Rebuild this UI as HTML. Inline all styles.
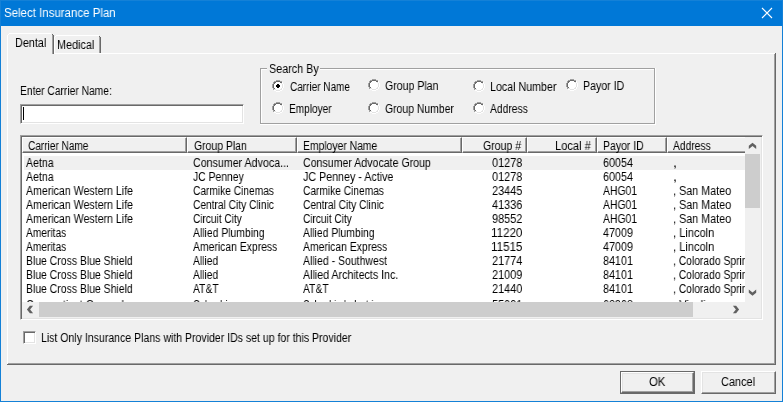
<!DOCTYPE html>
<html><head><meta charset="utf-8"><title>Select Insurance Plan</title>
<style>
*{box-sizing:border-box;margin:0;padding:0}
html,body{width:783px;height:402px;overflow:hidden;background:#f0f0f0}
body{position:relative;font-family:"Liberation Sans",sans-serif;font-size:12px;color:#000}
div,span,svg{position:absolute}
.t{will-change:transform;white-space:pre;font-size:12px;line-height:14px;transform-origin:0 0;display:block}
#title{left:0;top:0;width:783px;height:26px;background:#0078d7}
.bl{background:#1481d7}
.w{background:#fff}.g{background:#a0a0a0}.d{background:#696969}.l{background:#e3e3e3}
.btn{background:#f0f0f0;border:1px solid;border-color:#fff #696969 #696969 #fff;box-shadow:inset -1px -1px 0 #a0a0a0,inset 1px 1px 0 #e3e3e3}
.sunk{border:1px solid;border-color:#a0a0a0 #fff #fff #a0a0a0;box-shadow:inset 1px 1px 0 #696969,inset -1px -1px 0 #e3e3e3;background:#fff}
.hd{top:137px;height:16px;background:#f0f0f0;border:1px solid;border-color:#fff #696969 #696969 #fff;box-shadow:inset -1px -1px 0 #a0a0a0}
.rad{width:12px;height:12px;border-radius:50%;background:#fff;border:1px solid;border-color:#a0a0a0 #fff #fff #a0a0a0;box-shadow:inset 1px 1px 0 #696969,inset -1px -1px 0 #e3e3e3}
</style></head><body>
<div id="title"></div>
<div class="bl" style="left:0;top:0;width:1px;height:402px"></div><div class="bl" style="left:782px;top:0;width:1px;height:402px"></div><div class="bl" style="left:0;top:401px;width:783px;height:1px"></div><div class="bl" style="left:0;top:0;width:783px;height:1px"></div>
<svg style="left:761px;top:7px" width="12" height="12" viewBox="0 0 12 12"><path d="M1 1L11 11M11 1L1 11" stroke="#fff" stroke-width="1.1" fill="none"/></svg>
<div class="w" style="left:7px;top:53px;width:768px;height:1px"></div>
<div class="w" style="left:7px;top:53px;width:1px;height:311px"></div>
<div class="g" style="left:774px;top:54px;width:1px;height:310px"></div><div class="d" style="left:775px;top:53px;width:1px;height:312px"></div>
<div class="g" style="left:8px;top:363px;width:767px;height:1px"></div><div class="d" style="left:7px;top:364px;width:769px;height:1px"></div>
<div class="w" style="left:56px;top:35px;width:43px;height:1px"></div><div class="w" style="left:54px;top:37px;width:1px;height:16px"></div><div class="w" style="left:55px;top:36px;width:1px;height:1px"></div>
<div class="g" style="left:99px;top:37px;width:1px;height:16px"></div><div class="d" style="left:100px;top:37px;width:1px;height:16px"></div><div class="d" style="left:99px;top:36px;width:1px;height:1px"></div>
<div style="left:8px;top:34px;width:44px;height:21px;background:#f0f0f0"></div>
<div class="w" style="left:9px;top:33px;width:42px;height:1px"></div><div class="w" style="left:7px;top:35px;width:1px;height:19px"></div><div class="w" style="left:8px;top:34px;width:1px;height:1px"></div>
<div class="g" style="left:52px;top:35px;width:1px;height:19px"></div><div class="d" style="left:53px;top:35px;width:1px;height:19px"></div><div class="d" style="left:52px;top:34px;width:1px;height:1px"></div>
<div class="sunk" style="left:20px;top:104px;width:224px;height:20px"></div>
<div style="left:23px;top:107px;width:1px;height:13px;background:#000"></div>
<div style="left:260px;top:68px;width:395px;height:56px;border:1px solid #a0a0a0"></div>
<div class="w" style="left:261px;top:69px;width:393px;height:1px"></div><div class="w" style="left:261px;top:69px;width:1px;height:54px"></div><div class="w" style="left:655px;top:68px;width:1px;height:57px"></div><div class="w" style="left:260px;top:124px;width:396px;height:1px"></div>
<div style="left:267px;top:62px;width:53px;height:14px;background:#f0f0f0"></div>
<svg style="left:272px;top:80px" width="12" height="12" viewBox="0 0 12 12" shape-rendering="crispEdges"><path fill="#a0a0a0" d="M4 0h4v1h-4zM2 1h2v1h-2zM8 1h2v1h-2zM1 2h1v1h-1zM1 3h1v1h-1zM0 4h1v1h-1zM0 5h1v1h-1zM0 6h1v1h-1zM0 7h1v1h-1zM1 8h1v1h-1zM1 9h1v1h-1z"/><path fill="#696969" d="M4 1h4v1h-4zM2 2h2v1h-2zM8 2h2v1h-2zM2 3h1v1h-1zM1 4h1v1h-1zM1 5h1v1h-1zM1 6h1v1h-1zM1 7h1v1h-1zM2 8h1v1h-1z"/><path fill="#fff" d="M4 2h4v1h-4zM10 2h1v1h-1zM3 3h6v1h-6zM10 3h1v1h-1zM2 4h8v1h-8zM11 4h1v1h-1zM2 5h8v1h-8zM11 5h1v1h-1zM2 6h8v1h-8zM11 6h1v1h-1zM2 7h8v1h-8zM11 7h1v1h-1zM3 8h6v1h-6zM10 8h1v1h-1zM4 9h4v1h-4zM10 9h1v1h-1zM2 10h2v1h-2zM8 10h2v1h-2zM4 11h4v1h-4z"/><path fill="#e3e3e3" d="M9 3h1v1h-1zM10 4h1v1h-1zM10 5h1v1h-1zM10 6h1v1h-1zM10 7h1v1h-1zM9 8h1v1h-1zM2 9h2v1h-2zM8 9h2v1h-2zM4 10h4v1h-4z"/><path fill="#000" d="M5 4h1v1h-1zM6 4h1v1h-1zM4 5h1v1h-1zM5 5h1v1h-1zM6 5h1v1h-1zM7 5h1v1h-1zM4 6h1v1h-1zM5 6h1v1h-1zM6 6h1v1h-1zM7 6h1v1h-1zM5 7h1v1h-1zM6 7h1v1h-1z"/></svg>
<svg style="left:272px;top:102px" width="12" height="12" viewBox="0 0 12 12" shape-rendering="crispEdges"><path fill="#a0a0a0" d="M4 0h4v1h-4zM2 1h2v1h-2zM8 1h2v1h-2zM1 2h1v1h-1zM1 3h1v1h-1zM0 4h1v1h-1zM0 5h1v1h-1zM0 6h1v1h-1zM0 7h1v1h-1zM1 8h1v1h-1zM1 9h1v1h-1z"/><path fill="#696969" d="M4 1h4v1h-4zM2 2h2v1h-2zM8 2h2v1h-2zM2 3h1v1h-1zM1 4h1v1h-1zM1 5h1v1h-1zM1 6h1v1h-1zM1 7h1v1h-1zM2 8h1v1h-1z"/><path fill="#fff" d="M4 2h4v1h-4zM10 2h1v1h-1zM3 3h6v1h-6zM10 3h1v1h-1zM2 4h8v1h-8zM11 4h1v1h-1zM2 5h8v1h-8zM11 5h1v1h-1zM2 6h8v1h-8zM11 6h1v1h-1zM2 7h8v1h-8zM11 7h1v1h-1zM3 8h6v1h-6zM10 8h1v1h-1zM4 9h4v1h-4zM10 9h1v1h-1zM2 10h2v1h-2zM8 10h2v1h-2zM4 11h4v1h-4z"/><path fill="#e3e3e3" d="M9 3h1v1h-1zM10 4h1v1h-1zM10 5h1v1h-1zM10 6h1v1h-1zM10 7h1v1h-1zM9 8h1v1h-1zM2 9h2v1h-2zM8 9h2v1h-2zM4 10h4v1h-4z"/></svg>
<svg style="left:368px;top:79px" width="12" height="12" viewBox="0 0 12 12" shape-rendering="crispEdges"><path fill="#a0a0a0" d="M4 0h4v1h-4zM2 1h2v1h-2zM8 1h2v1h-2zM1 2h1v1h-1zM1 3h1v1h-1zM0 4h1v1h-1zM0 5h1v1h-1zM0 6h1v1h-1zM0 7h1v1h-1zM1 8h1v1h-1zM1 9h1v1h-1z"/><path fill="#696969" d="M4 1h4v1h-4zM2 2h2v1h-2zM8 2h2v1h-2zM2 3h1v1h-1zM1 4h1v1h-1zM1 5h1v1h-1zM1 6h1v1h-1zM1 7h1v1h-1zM2 8h1v1h-1z"/><path fill="#fff" d="M4 2h4v1h-4zM10 2h1v1h-1zM3 3h6v1h-6zM10 3h1v1h-1zM2 4h8v1h-8zM11 4h1v1h-1zM2 5h8v1h-8zM11 5h1v1h-1zM2 6h8v1h-8zM11 6h1v1h-1zM2 7h8v1h-8zM11 7h1v1h-1zM3 8h6v1h-6zM10 8h1v1h-1zM4 9h4v1h-4zM10 9h1v1h-1zM2 10h2v1h-2zM8 10h2v1h-2zM4 11h4v1h-4z"/><path fill="#e3e3e3" d="M9 3h1v1h-1zM10 4h1v1h-1zM10 5h1v1h-1zM10 6h1v1h-1zM10 7h1v1h-1zM9 8h1v1h-1zM2 9h2v1h-2zM8 9h2v1h-2zM4 10h4v1h-4z"/></svg>
<svg style="left:368px;top:102px" width="12" height="12" viewBox="0 0 12 12" shape-rendering="crispEdges"><path fill="#a0a0a0" d="M4 0h4v1h-4zM2 1h2v1h-2zM8 1h2v1h-2zM1 2h1v1h-1zM1 3h1v1h-1zM0 4h1v1h-1zM0 5h1v1h-1zM0 6h1v1h-1zM0 7h1v1h-1zM1 8h1v1h-1zM1 9h1v1h-1z"/><path fill="#696969" d="M4 1h4v1h-4zM2 2h2v1h-2zM8 2h2v1h-2zM2 3h1v1h-1zM1 4h1v1h-1zM1 5h1v1h-1zM1 6h1v1h-1zM1 7h1v1h-1zM2 8h1v1h-1z"/><path fill="#fff" d="M4 2h4v1h-4zM10 2h1v1h-1zM3 3h6v1h-6zM10 3h1v1h-1zM2 4h8v1h-8zM11 4h1v1h-1zM2 5h8v1h-8zM11 5h1v1h-1zM2 6h8v1h-8zM11 6h1v1h-1zM2 7h8v1h-8zM11 7h1v1h-1zM3 8h6v1h-6zM10 8h1v1h-1zM4 9h4v1h-4zM10 9h1v1h-1zM2 10h2v1h-2zM8 10h2v1h-2zM4 11h4v1h-4z"/><path fill="#e3e3e3" d="M9 3h1v1h-1zM10 4h1v1h-1zM10 5h1v1h-1zM10 6h1v1h-1zM10 7h1v1h-1zM9 8h1v1h-1zM2 9h2v1h-2zM8 9h2v1h-2zM4 10h4v1h-4z"/></svg>
<svg style="left:473px;top:80px" width="12" height="12" viewBox="0 0 12 12" shape-rendering="crispEdges"><path fill="#a0a0a0" d="M4 0h4v1h-4zM2 1h2v1h-2zM8 1h2v1h-2zM1 2h1v1h-1zM1 3h1v1h-1zM0 4h1v1h-1zM0 5h1v1h-1zM0 6h1v1h-1zM0 7h1v1h-1zM1 8h1v1h-1zM1 9h1v1h-1z"/><path fill="#696969" d="M4 1h4v1h-4zM2 2h2v1h-2zM8 2h2v1h-2zM2 3h1v1h-1zM1 4h1v1h-1zM1 5h1v1h-1zM1 6h1v1h-1zM1 7h1v1h-1zM2 8h1v1h-1z"/><path fill="#fff" d="M4 2h4v1h-4zM10 2h1v1h-1zM3 3h6v1h-6zM10 3h1v1h-1zM2 4h8v1h-8zM11 4h1v1h-1zM2 5h8v1h-8zM11 5h1v1h-1zM2 6h8v1h-8zM11 6h1v1h-1zM2 7h8v1h-8zM11 7h1v1h-1zM3 8h6v1h-6zM10 8h1v1h-1zM4 9h4v1h-4zM10 9h1v1h-1zM2 10h2v1h-2zM8 10h2v1h-2zM4 11h4v1h-4z"/><path fill="#e3e3e3" d="M9 3h1v1h-1zM10 4h1v1h-1zM10 5h1v1h-1zM10 6h1v1h-1zM10 7h1v1h-1zM9 8h1v1h-1zM2 9h2v1h-2zM8 9h2v1h-2zM4 10h4v1h-4z"/></svg>
<svg style="left:473px;top:102px" width="12" height="12" viewBox="0 0 12 12" shape-rendering="crispEdges"><path fill="#a0a0a0" d="M4 0h4v1h-4zM2 1h2v1h-2zM8 1h2v1h-2zM1 2h1v1h-1zM1 3h1v1h-1zM0 4h1v1h-1zM0 5h1v1h-1zM0 6h1v1h-1zM0 7h1v1h-1zM1 8h1v1h-1zM1 9h1v1h-1z"/><path fill="#696969" d="M4 1h4v1h-4zM2 2h2v1h-2zM8 2h2v1h-2zM2 3h1v1h-1zM1 4h1v1h-1zM1 5h1v1h-1zM1 6h1v1h-1zM1 7h1v1h-1zM2 8h1v1h-1z"/><path fill="#fff" d="M4 2h4v1h-4zM10 2h1v1h-1zM3 3h6v1h-6zM10 3h1v1h-1zM2 4h8v1h-8zM11 4h1v1h-1zM2 5h8v1h-8zM11 5h1v1h-1zM2 6h8v1h-8zM11 6h1v1h-1zM2 7h8v1h-8zM11 7h1v1h-1zM3 8h6v1h-6zM10 8h1v1h-1zM4 9h4v1h-4zM10 9h1v1h-1zM2 10h2v1h-2zM8 10h2v1h-2zM4 11h4v1h-4z"/><path fill="#e3e3e3" d="M9 3h1v1h-1zM10 4h1v1h-1zM10 5h1v1h-1zM10 6h1v1h-1zM10 7h1v1h-1zM9 8h1v1h-1zM2 9h2v1h-2zM8 9h2v1h-2zM4 10h4v1h-4z"/></svg>
<svg style="left:566px;top:79px" width="12" height="12" viewBox="0 0 12 12" shape-rendering="crispEdges"><path fill="#a0a0a0" d="M4 0h4v1h-4zM2 1h2v1h-2zM8 1h2v1h-2zM1 2h1v1h-1zM1 3h1v1h-1zM0 4h1v1h-1zM0 5h1v1h-1zM0 6h1v1h-1zM0 7h1v1h-1zM1 8h1v1h-1zM1 9h1v1h-1z"/><path fill="#696969" d="M4 1h4v1h-4zM2 2h2v1h-2zM8 2h2v1h-2zM2 3h1v1h-1zM1 4h1v1h-1zM1 5h1v1h-1zM1 6h1v1h-1zM1 7h1v1h-1zM2 8h1v1h-1z"/><path fill="#fff" d="M4 2h4v1h-4zM10 2h1v1h-1zM3 3h6v1h-6zM10 3h1v1h-1zM2 4h8v1h-8zM11 4h1v1h-1zM2 5h8v1h-8zM11 5h1v1h-1zM2 6h8v1h-8zM11 6h1v1h-1zM2 7h8v1h-8zM11 7h1v1h-1zM3 8h6v1h-6zM10 8h1v1h-1zM4 9h4v1h-4zM10 9h1v1h-1zM2 10h2v1h-2zM8 10h2v1h-2zM4 11h4v1h-4z"/><path fill="#e3e3e3" d="M9 3h1v1h-1zM10 4h1v1h-1zM10 5h1v1h-1zM10 6h1v1h-1zM10 7h1v1h-1zM9 8h1v1h-1zM2 9h2v1h-2zM8 9h2v1h-2zM4 10h4v1h-4z"/></svg>
<div class="sunk" style="left:20px;top:135px;width:743px;height:185px"></div>
<div style="left:22px;top:153px;width:723px;height:149px;overflow:hidden;background:#fff">
<div style="left:2px;top:3px;width:721px;height:14px;background:#f0f0f0"></div>
<span class="t" style="left:4.10px;top:3px;transform:scaleX(0.8812)">Aetna</span>
<span class="t" style="left:171.30px;top:3px;transform:scaleX(0.8879)">Consumer Advoca...</span>
<span class="t" style="left:281.30px;top:3px;transform:scaleX(0.8828)">Consumer Advocate Group</span>
<span class="t" style="left:469.60px;top:3px;transform:scaleX(0.9091)">01278</span>
<span class="t" style="left:581.00px;top:3px;transform:scaleX(0.8970)">60054</span>
<span class="t" style="left:650.80px;top:3px;transform:scaleX(1.2000)">,</span>
<span class="t" style="left:4.10px;top:17px;transform:scaleX(0.8812)">Aetna</span>
<span class="t" style="left:171.30px;top:17px;transform:scaleX(0.8644)">JC Penney</span>
<span class="t" style="left:281.30px;top:17px;transform:scaleX(0.8911)">JC Penney - Active</span>
<span class="t" style="left:469.60px;top:17px;transform:scaleX(0.9091)">01278</span>
<span class="t" style="left:581.00px;top:17px;transform:scaleX(0.8970)">60054</span>
<span class="t" style="left:650.80px;top:17px;transform:scaleX(1.2000)">,</span>
<span class="t" style="left:4.10px;top:31px;transform:scaleX(0.8826)">American Western Life</span>
<span class="t" style="left:171.30px;top:31px;transform:scaleX(0.8484)">Carmike Cinemas</span>
<span class="t" style="left:281.30px;top:31px;transform:scaleX(0.8484)">Carmike Cinemas</span>
<span class="t" style="left:469.60px;top:31px;transform:scaleX(0.9091)">23445</span>
<span class="t" style="left:581.00px;top:31px;transform:scaleX(0.8641)">AHG01</span>
<span class="t" style="left:651.10px;top:31px;transform:scaleX(0.9000)">, San Mateo</span>
<span class="t" style="left:4.10px;top:45px;transform:scaleX(0.8826)">American Western Life</span>
<span class="t" style="left:171.30px;top:45px;transform:scaleX(0.8484)">Central City Clinic</span>
<span class="t" style="left:281.30px;top:45px;transform:scaleX(0.8484)">Central City Clinic</span>
<span class="t" style="left:469.60px;top:45px;transform:scaleX(0.9091)">41336</span>
<span class="t" style="left:581.00px;top:45px;transform:scaleX(0.8641)">AHG01</span>
<span class="t" style="left:651.10px;top:45px;transform:scaleX(0.9000)">, San Mateo</span>
<span class="t" style="left:4.10px;top:59px;transform:scaleX(0.8826)">American Western Life</span>
<span class="t" style="left:171.30px;top:59px;transform:scaleX(0.8397)">Circuit City</span>
<span class="t" style="left:281.30px;top:59px;transform:scaleX(0.8397)">Circuit City</span>
<span class="t" style="left:469.60px;top:59px;transform:scaleX(0.9091)">98552</span>
<span class="t" style="left:581.00px;top:59px;transform:scaleX(0.8641)">AHG01</span>
<span class="t" style="left:651.10px;top:59px;transform:scaleX(0.9000)">, San Mateo</span>
<span class="t" style="left:4.10px;top:73px;transform:scaleX(0.8511)">Ameritas</span>
<span class="t" style="left:171.30px;top:73px;transform:scaleX(0.8659)">Allied Plumbing</span>
<span class="t" style="left:281.30px;top:73px;transform:scaleX(0.8659)">Allied Plumbing</span>
<span class="t" style="left:468.63px;top:73px;transform:scaleX(0.9677)">11220</span>
<span class="t" style="left:581.00px;top:73px;transform:scaleX(0.8970)">47009</span>
<span class="t" style="left:651.08px;top:73px;transform:scaleX(0.9233)">, Lincoln</span>
<span class="t" style="left:4.10px;top:87px;transform:scaleX(0.8511)">Ameritas</span>
<span class="t" style="left:171.30px;top:87px;transform:scaleX(0.8660)">American Express</span>
<span class="t" style="left:281.30px;top:87px;transform:scaleX(0.8660)">American Express</span>
<span class="t" style="left:468.63px;top:87px;transform:scaleX(0.9677)">11515</span>
<span class="t" style="left:581.00px;top:87px;transform:scaleX(0.8970)">47009</span>
<span class="t" style="left:651.08px;top:87px;transform:scaleX(0.9233)">, Lincoln</span>
<span class="t" style="left:4.13px;top:101px;transform:scaleX(0.8694)">Blue Cross Blue Shield</span>
<span class="t" style="left:171.30px;top:101px;transform:scaleX(0.8552)">Allied</span>
<span class="t" style="left:281.30px;top:101px;transform:scaleX(0.8750)">Allied - Southwest</span>
<span class="t" style="left:469.60px;top:101px;transform:scaleX(0.9091)">21774</span>
<span class="t" style="left:581.00px;top:101px;transform:scaleX(0.8970)">84101</span>
<span class="t" style="left:651.14px;top:101px;transform:scaleX(0.8592)">, Colorado Springs</span>
<span class="t" style="left:4.13px;top:115px;transform:scaleX(0.8694)">Blue Cross Blue Shield</span>
<span class="t" style="left:171.30px;top:115px;transform:scaleX(0.8552)">Allied</span>
<span class="t" style="left:281.30px;top:115px;transform:scaleX(0.8879)">Allied Architects Inc.</span>
<span class="t" style="left:469.60px;top:115px;transform:scaleX(0.9091)">21009</span>
<span class="t" style="left:581.00px;top:115px;transform:scaleX(0.8970)">84101</span>
<span class="t" style="left:651.14px;top:115px;transform:scaleX(0.8592)">, Colorado Springs</span>
<span class="t" style="left:4.13px;top:129px;transform:scaleX(0.8694)">Blue Cross Blue Shield</span>
<span class="t" style="left:171.30px;top:129px;transform:scaleX(0.8600)">AT&amp;T</span>
<span class="t" style="left:281.30px;top:129px;transform:scaleX(0.8600)">AT&amp;T</span>
<span class="t" style="left:469.60px;top:129px;transform:scaleX(0.9091)">21440</span>
<span class="t" style="left:581.00px;top:129px;transform:scaleX(0.8970)">84101</span>
<span class="t" style="left:651.14px;top:129px;transform:scaleX(0.8592)">, Colorado Springs</span>
<span class="t" style="left:4.10px;top:145px;transform:scaleX(0.8945)">Connecticut General</span>
<span class="t" style="left:171.30px;top:145px;transform:scaleX(0.7843)">Columbia</span>
<span class="t" style="left:281.30px;top:145px;transform:scaleX(0.7547)">Columbia Industries</span>
<span class="t" style="left:469.60px;top:145px;transform:scaleX(0.9091)">55001</span>
<span class="t" style="left:581.00px;top:145px;transform:scaleX(0.8970)">62308</span>
<span class="t" style="left:651.07px;top:145px;transform:scaleX(0.9268)">, Visalia</span>
</div>
<div style="left:22px;top:137px;width:723px;height:16px;overflow:hidden">
<div class="hd" style="left:0px;top:0;width:165px"></div>
<div class="hd" style="left:165px;top:0;width:110px"></div>
<div class="hd" style="left:275px;top:0;width:165px"></div>
<div class="hd" style="left:440px;top:0;width:65px"></div>
<div class="hd" style="left:505px;top:0;width:70px"></div>
<div class="hd" style="left:575px;top:0;width:70px"></div>
<div class="hd" style="left:645px;top:0;width:120px"></div>
</div>
<div style="left:745px;top:137px;width:16px;height:165px;background:#f0f0f0"></div>
<div style="left:745px;top:154px;width:15px;height:54px;background:#cdcdcd"></div>
<div style="left:22px;top:302px;width:739px;height:16px;background:#f0f0f0"></div>
<div style="left:39px;top:302px;width:654px;height:15px;background:#cdcdcd"></div>
<svg style="left:748px;top:142px" width="9" height="8" viewBox="0 0 9 8"><path d="M0.8 3.8L4.5 0.8L8.2 3.8V7L4.5 4L0.8 7Z" fill="#606060"/></svg>
<svg style="left:748px;top:289px" width="9" height="8" viewBox="0 0 9 8"><path d="M0.8 3.7L4.5 6.7L8.2 3.7V0.5L4.5 3.5L0.8 0.5Z" fill="#606060"/></svg>
<svg style="left:26px;top:305px" width="8" height="9" viewBox="0 0 8 9"><path d="M3.9 0.8L0.9 4.5L3.9 8.2H7.1L4.1 4.5L7.1 0.8Z" fill="#606060"/></svg>
<svg style="left:732px;top:305px" width="8" height="9" viewBox="0 0 8 9"><path d="M4.1 0.8L7.1 4.5L4.1 8.2H0.9L3.9 4.5L0.9 0.8Z" fill="#606060"/></svg>
<div class="sunk" style="left:23px;top:331px;width:13px;height:13px"></div>
<div style="left:620px;top:371px;width:75px;height:23px;background:#696969"></div><div class="btn" style="left:621px;top:372px;width:73px;height:21px"></div>
<div class="btn" style="left:701px;top:371px;width:75px;height:23px"></div>
<span class="t" style="left:3.64px;top:6px;transform:scaleX(0.9565);color:#fff">Select Insurance Plan</span>
<span class="t" style="left:14.60px;top:36px;transform:scaleX(0.9030)">Dental</span>
<span class="t" style="left:57.40px;top:38px;transform:scaleX(0.9025)">Medical</span>
<span class="t" style="left:19.54px;top:84px;transform:scaleX(0.8557)">Enter Carrier Name:</span>
<span class="t" style="left:268.90px;top:62px;transform:scaleX(0.9000)">Search By</span>
<span class="t" style="left:290.00px;top:80px;transform:scaleX(0.8333)">Carrier Name</span>
<span class="t" style="left:289.16px;top:102px;transform:scaleX(0.8400)">Employer</span>
<span class="t" style="left:385.20px;top:79px;transform:scaleX(0.8800)">Group Plan</span>
<span class="t" style="left:385.20px;top:102px;transform:scaleX(0.8684)">Group Number</span>
<span class="t" style="left:489.51px;top:80px;transform:scaleX(0.8892)">Local Number</span>
<span class="t" style="left:490.20px;top:102px;transform:scaleX(0.8591)">Address</span>
<span class="t" style="left:582.82px;top:79px;transform:scaleX(0.8822)">Payor ID</span>
<span class="t" style="left:28.40px;top:139px;transform:scaleX(0.8389)">Carrier Name</span>
<span class="t" style="left:194.00px;top:139px;transform:scaleX(0.8700)">Group Plan</span>
<span class="t" style="left:302.84px;top:139px;transform:scaleX(0.8635)">Employer Name</span>
<span class="t" style="left:482.80px;top:139px;transform:scaleX(0.8773)">Group #</span>
<span class="t" style="left:554.77px;top:139px;transform:scaleX(0.9263)">Local #</span>
<span class="t" style="left:602.63px;top:139px;transform:scaleX(0.8733)">Payor ID</span>
<span class="t" style="left:673.20px;top:139px;transform:scaleX(0.8568)">Address</span>
<span class="t" style="left:40.52px;top:331px;transform:scaleX(0.8776)">List Only Insurance Plans with Provider IDs set up for this Provider</span>
<span class="t" style="left:649.30px;top:375px;transform:scaleX(0.9471)">OK</span>
<span class="t" style="left:721.20px;top:375px;transform:scaleX(0.9108)">Cancel</span>
</body></html>
